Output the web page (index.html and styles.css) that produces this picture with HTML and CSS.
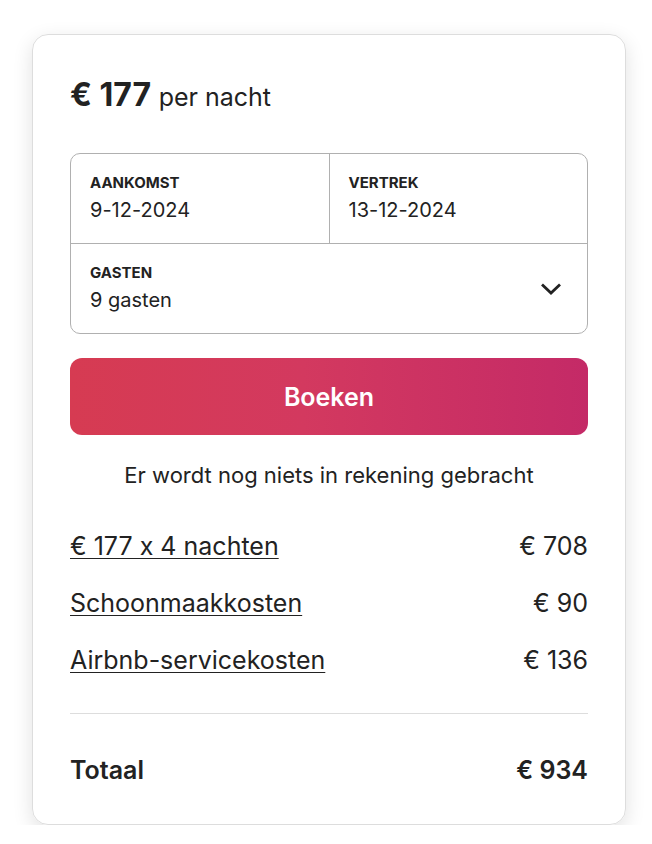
FILE: index.html
```html
<!DOCTYPE html>
<html lang="nl">
  <head>
    <meta charset="UTF-8" />
    <meta name="viewport" content="width=device-width, initial-scale=1.0" />
    <title>Boeken</title>
    <link rel="stylesheet" href="styles.css">
  </head>
  <body>
    <div class="card">
      <div class="price">
        <span class="amount">€ 177</span>
        <span class="unit">per nacht</span>
      </div>

      <div class="picker">
        <div class="dates">
          <div class="field">
            <div class="label">Aankomst</div>
            <div class="value">9-12-2024</div>
          </div>
          <div class="field">
            <div class="label">Vertrek</div>
            <div class="value">13-12-2024</div>
          </div>
        </div>
        <div class="field guests">
          <div>
            <div class="label">Gasten</div>
            <div class="value">9 gasten</div>
          </div>
          <svg class="chevron" width="22" height="14" viewBox="0 0 22 14">
            <path d="M2 2.5 L11 11 L20 2.5" fill="none" stroke="#222" stroke-width="2.8" />
          </svg>
        </div>
      </div>

      <button class="book">Boeken</button>

      <p class="note">Er wordt nog niets in rekening gebracht</p>

      <div class="lines">
        <div class="line">
          <a href="#">€ 177 x 4 nachten</a>
          <span>€ 708</span>
        </div>
        <div class="line">
          <a href="#">Schoonmaakkosten</a>
          <span>€ 90</span>
        </div>
        <div class="line">
          <a href="#">Airbnb-servicekosten</a>
          <span>€ 136</span>
        </div>
      </div>

      <div class="total">
        <span>Totaal</span>
        <span>€ 934</span>
      </div>
    </div>
  </body>
</html>
```

FILE: styles.css
```css
* {
  margin: 0;
  padding: 0;
  box-sizing: border-box;
}

body {
  background-color: #fff;
  color: #222;
  font-family: Inter, "Noto Sans", sans-serif;
  font-feature-settings: "calt" 0;
  padding: 34px 26px 0 32px;
}

.card {
  width: 594px;
  border: 1px solid #dddddd;
  border-radius: 16px;
  padding: 41px 37px 40px;
  box-shadow: 0 6px 20px rgba(0, 0, 0, 0.12);
}

.price {
  line-height: 38px;
}

.amount {
  font-size: 32px;
  font-weight: 700;
}

.unit {
  font-size: 25px;
  margin-left: 3px;
}

.picker {
  margin-top: 34px;
  border: 1px solid #b0b0b0;
  border-radius: 10px;
}

.dates {
  display: flex;
  border-bottom: 1px solid #b0b0b0;
}

.dates .field {
  flex: 1;
}

.dates .field + .field {
  border-left: 1px solid #b0b0b0;
}

.field {
  height: 89px;
  padding: 20px 19px 0;
}

.label {
  font-size: 15px;
  font-weight: 700;
  line-height: 18px;
  text-transform: uppercase;
}

.value {
  font-size: 20px;
  line-height: 28px;
  margin-top: 4px;
}

.guests {
  display: flex;
  justify-content: space-between;
  align-items: center;
  padding-top: 0;
}

.chevron {
  margin-right: 6px;
}

.book {
  display: block;
  width: 100%;
  height: 77px;
  margin-top: 24px;
  border: none;
  border-radius: 12px;
  background: linear-gradient(90deg, #d63b52, #d3395f 45%, #c42a67);
  color: #fff;
  font-family: inherit;
  font-size: 25px;
  font-weight: 600;
  cursor: pointer;
}

.note {
  margin-top: 27px;
  text-align: center;
  font-size: 22px;
  line-height: 26px;
}

.lines {
  display: flex;
  flex-direction: column;
  gap: 29px;
  margin-top: 44px;
  padding-bottom: 39px;
  border-bottom: 1px solid #dddddd;
}

.line,
.total {
  display: flex;
  justify-content: space-between;
  font-size: 25px;
  line-height: 28px;
}

.line a {
  color: #222;
  text-decoration-thickness: 1px;
  text-underline-offset: 3px;
}

.total {
  margin-top: 42px;
  font-weight: 600;
}
```
